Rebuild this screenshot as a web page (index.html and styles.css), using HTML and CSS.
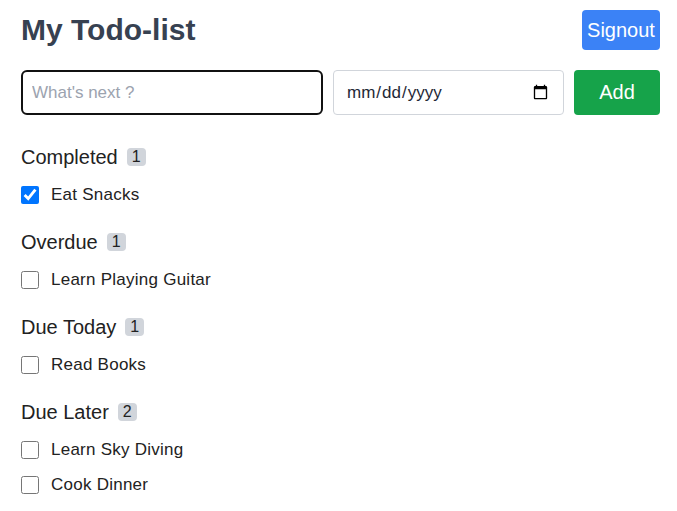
FILE: index.html
```html
<!DOCTYPE html>
<html lang="en">
<head>
<meta charset="utf-8">
<title>My Todo-list</title>
<link rel="stylesheet" href="styles.css">
</head>
<body>
<div class="app">
  <header class="top">
    <h1 class="title">My Todo-list</h1>
    <button class="signout">Signout</button>
  </header>
  <form class="new-todo">
    <input class="todo-input" type="text" placeholder="What's next ?">
    <input class="date-input" type="date">
    <button class="add" type="button">Add</button>
  </form>

  <section class="group">
    <h2 class="group-title">Completed <span class="badge">1</span></h2>
    <ul class="items">
      <li class="item"><input type="checkbox" class="check" checked><span>Eat Snacks</span></li>
    </ul>
  </section>

  <section class="group">
    <h2 class="group-title">Overdue <span class="badge">1</span></h2>
    <ul class="items">
      <li class="item"><input type="checkbox" class="check"><span>Learn Playing Guitar</span></li>
    </ul>
  </section>

  <section class="group">
    <h2 class="group-title">Due Today <span class="badge">1</span></h2>
    <ul class="items">
      <li class="item"><input type="checkbox" class="check"><span>Read Books</span></li>
    </ul>
  </section>

  <section class="group">
    <h2 class="group-title">Due Later <span class="badge">2</span></h2>
    <ul class="items">
      <li class="item"><input type="checkbox" class="check"><span>Learn Sky Diving</span></li>
      <li class="item"><input type="checkbox" class="check"><span>Cook Dinner</span></li>
    </ul>
  </section>
</div>
</body>
</html>
```

FILE: styles.css
```css
* { box-sizing: border-box; }
html, body { margin: 0; padding: 0; background: #fff; }
body { font-family: "Liberation Sans", Arial, sans-serif; color: #222; }

.app { padding: 10px 17px 0 21px; }

.top {
  display: flex;
  align-items: center;
  justify-content: space-between;
  height: 40px;
}
.title {
  margin: 0;
  font-size: 30px;
  font-weight: 700;
  line-height: 36px;
  color: #374151;
}
.signout {
  height: 40px;
  width: 78px;
  padding: 0;
  border: none;
  border-radius: 4px;
  background: #3b82f6;
  color: #fff;
  font-family: inherit;
  font-size: 20px;
}

.new-todo {
  display: flex;
  gap: 10px;
  margin: 20px 0 0;
  height: 45px;
}
.todo-input {
  flex: 1;
  min-width: 0;
  height: 45px;
  border: 2px solid #111;
  border-radius: 6px;
  padding: 0 9px;
  font-family: inherit;
  font-size: 17px;
  color: #222;
  outline: none;
}
.todo-input::placeholder { color: #9ca3af; }
.date-input {
  width: 231px;
  height: 45px;
  border: 1px solid #d1d5db;
  border-radius: 4px;
  padding: 0 12px;
  font-family: inherit;
  font-size: 17px;
  color: #1f2937;
  background: #fff;
}
.add {
  width: 86px;
  height: 45px;
  border: none;
  border-radius: 4px;
  background: #16a34a;
  color: #fff;
  font-family: inherit;
  font-size: 20px;
  padding: 0;
}

.group { margin-top: 16px; }
.new-todo + .group { margin-top: 28px; }
.group-title {
  margin: 0;
  height: 28px;
  display: flex;
  align-items: center;
  gap: 9px;
  font-size: 20px;
  font-weight: 400;
  color: #222;
}
.badge {
  display: inline-block;
  height: 18px;
  line-height: 18px;
  padding: 0 5px;
  border-radius: 4px;
  background: #d1d5db;
  font-size: 16px;
  color: #222;
}
.items { list-style: none; margin: 6px 0 0; padding: 0; }
.item {
  display: flex;
  align-items: center;
  gap: 12px;
  height: 35px;
  font-size: 17px;
  letter-spacing: 0.25px;
  color: #222;
}
.check {
  width: 18px;
  height: 18px;
  margin: 0;
}
```
